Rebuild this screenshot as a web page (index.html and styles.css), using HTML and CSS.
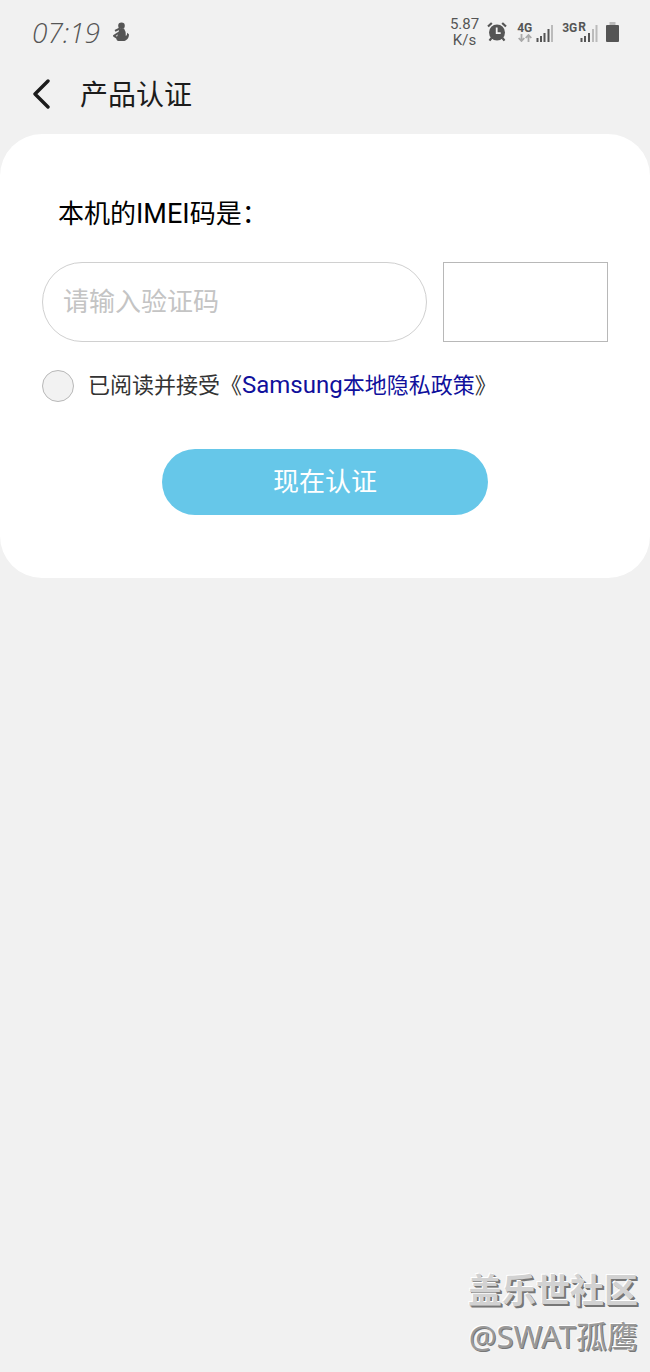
FILE: index.html
```html
<!DOCTYPE html>
<html lang="zh-CN">
<head>
<meta charset="utf-8">
<meta name="viewport" content="width=device-width, initial-scale=1">
<title>产品认证</title>
<link rel="stylesheet" href="styles.css">
</head>
<body>
<header class="status">
  <time class="clock">07:19</time>
  <svg class="app-icon" width="18" height="20" viewBox="0 0 18 20" aria-hidden="true">
    <circle cx="9.500" cy="3.800" r="3.300" fill="#555"/>
    <path d="M7.500 6.500h4.500l1.600 3.500.2 4c1-.6 1.500-1.800 1.200-3.200l1.900 1.400c.4 3.600-2.400 6.800-5.600 6.800H6.500C5 19 4 17.500 4.500 16L6 12z" fill="#555"/>
    <path d="M3 8.800l5-2.300M7 10.500l-5 3.300 4 2.700" fill="none" stroke="#555" stroke-width="2" stroke-linejoin="round"/>
  </svg>
  <div class="indicators">
    <div class="speed"><span>5.87</span><span>K/s</span></div>
    <svg class="alarm" width="20" height="20" viewBox="0 0 20 20" aria-hidden="true">
      <circle cx="10" cy="10.500" r="8" fill="#555"/>
      <path d="M1 4.500L4.800 1M19 4.500L15.200 1M4.500 16l-2 2.600M15.500 16l2 2.600" stroke="#555" stroke-width="2.200" fill="none"/>
      <path d="M9.700 5.500v5.700h4" stroke="#f2f2f2" stroke-width="1.800" fill="none"/>
    </svg>
    <div class="network">
      <div class="kind"><span>4G</span>
        <svg width="14" height="8" viewBox="0 0 14 8" fill="none" stroke="#aaa" stroke-width="1.800" aria-hidden="true"><path d="M3.500 0v7M.7 4l2.800 3 2.800-3M10.500 8V1M7.700 4l2.800-3 2.800 3"/></svg>
      </div>
      <svg width="18" height="18" viewBox="0 0 18 18" aria-hidden="true"><path d="M.5 14h2v4h-2zM4 12h2v6H4zM7.500 9h2v9h-2zM11.500 5h2v13h-2z" fill="#555"/><path d="M15 1h2v17h-2z" fill="#bbb"/></svg>
    </div>
    <div class="network second">
      <div class="kind"><span>3G<sup>R</sup></span></div>
      <svg width="18" height="18" viewBox="0 0 18 18" aria-hidden="true"><path d="M.5 14h2v4h-2zM4 12h2v6H4zM8 9h2v9H8z" fill="#555"/><path d="M12 5h2v13h-2zM15.500 1h2v17h-2z" fill="#bbb"/></svg>
    </div>
    <svg width="13" height="20" viewBox="0 0 13 20" aria-hidden="true"><path d="M3.500 0h6v3h-6z" fill="#bbb"/><rect y="3" width="13" height="17" rx="1" fill="#555"/></svg>
  </div>
</header>
<nav class="bar">
  <button class="back" type="button" aria-label="返回">
    <svg width="18" height="30" viewBox="0 0 18 30" fill="none" stroke="#1c1c1c" stroke-width="3.400" stroke-linecap="round" stroke-linejoin="round"><path d="M16 2L3 15l13 13"/></svg>
  </button>
  <h1 class="title">产品认证</h1>
</nav>
<main>
  <form class="card">
    <label class="question" for="code">本机的<span class="latin">IMEI</span>码是：</label>
    <div class="entry">
      <input class="code" id="code" type="text" placeholder="请输入验证码">
      <div class="captcha"></div>
    </div>
    <div class="consent">
      <input class="check" id="agree" type="checkbox">
      <label for="agree">已阅读并接受《<a class="policy" href="#"><span class="latin">Samsung</span>本地隐私政策</a>》</label>
    </div>
    <button class="submit" type="button">现在认证</button>
  </form>
</main>
<footer class="mark">
  <span class="community">盖乐世社区</span>
  <span class="author">@SWAT孤鹰</span>
</footer>
</body>
</html>
```
FILE: styles.css
```css
* {
  box-sizing: border-box;
}

body {
  margin: 0;
  min-height: 100vh;
  display: flex;
  flex-direction: column;
  background: #f1f1f1;
  color: #000;
  font-family: Roboto, "Noto Sans CJK SC", sans-serif;
}

.status {
  display: flex;
  align-items: center;
  height: 64px;
  padding: 0 31px 0 32px;
  color: #555;
}

.clock {
  font: italic 300 28px "Open Sans", sans-serif;
}

.app-icon {
  margin-left: 12px;
}

.indicators {
  display: flex;
  align-items: center;
  gap: 8px;
  margin-left: auto;
}

.alarm {
  margin-right: 2px;
}

.speed {
  display: flex;
  flex-direction: column;
  align-items: center;
  font: 15px/16px Roboto, sans-serif;
}

.network {
  display: flex;
  align-items: flex-end;
  gap: 4px;
}

.second {
  gap: 0;
}

.kind {
  display: flex;
  flex-direction: column;
  align-items: center;
  height: 20px;
  font: bold 12px/12px Roboto, sans-serif;
}

.second .kind {
  margin-right: -6px;
}

.kind sup {
  font-size: 12px;
  line-height: 0;
  vertical-align: 1px;
  margin-left: 1px;
}

.bar {
  display: flex;
  align-items: center;
  height: 60px;
  margin-bottom: 10px;
  padding: 0 32px;
  gap: 30px;
}

.back {
  display: flex;
  padding: 0;
  border: 0;
  background: none;
}

.title {
  margin: 0;
  padding-top: 4px;
  color: #1c1c1c;
  font-size: 28px;
  font-weight: 400;
  line-height: 40px;
}

.card {
  display: flex;
  flex-direction: column;
  padding: 60px 42px 63px;
  border-radius: 42px;
  background: #fff;
}

.question {
  padding-left: 16px;
  font-size: 26px;
  line-height: 40px;
}

.question .latin {
  font-size: 27px;
}

.entry {
  display: grid;
  grid-template-columns: 7fr 3fr;
  gap: 16px;
  margin-top: 28px;
}

.code {
  width: 100%;
  min-width: 0;
  height: 80px;
  padding: 0 20px;
  border: 1px solid #d0d0d0;
  border-radius: 40px;
  background: #fff;
  font: inherit;
  font-size: 26px;
}

.code::placeholder {
  color: #c4c4c4;
  opacity: 1;
}

.captcha {
  border: 1px solid #b8b8b8;
}

.consent {
  display: flex;
  align-items: center;
  gap: 14px;
  margin-top: 26px;
  color: #333;
  font-size: 22px;
  line-height: 34px;
}

.check {
  appearance: none;
  width: 32px;
  height: 32px;
  margin: 0;
  border: 1px solid #b8b8b8;
  border-radius: 50%;
  background: #f2f2f2;
}

.check:checked {
  background: #66c7e9;
}

.policy {
  color: #10109c;
  text-decoration: none;
}

.policy .latin {
  font-size: 24px;
}

.submit {
  align-self: center;
  width: 326px;
  max-width: 100%;
  height: 66px;
  margin-top: 46px;
  padding: 0 0 6px;
  border: 0;
  border-radius: 33px;
  background: #66c7e9;
  color: #fff;
  font: inherit;
  font-size: 26px;
}

.mark {
  display: flex;
  flex-direction: column;
  align-items: flex-end;
  margin-top: auto;
  padding: 0 12px 14px;
  color: #d2d2d2;
  text-shadow: -1px -1px 0 #fff, 1px 1px 0 #777, 2px 2px 0 #777;
}

.community {
  font-size: 34px;
  font-weight: 700;
  line-height: 46px;
}

.author {
  color: #999;
  font-family: "Noto Sans", "Noto Sans CJK SC", sans-serif;
  font-size: 31px;
  line-height: 44px;
  text-shadow: -1px -1px 0 #fff, 1px 1px 0 #777;
}
```
